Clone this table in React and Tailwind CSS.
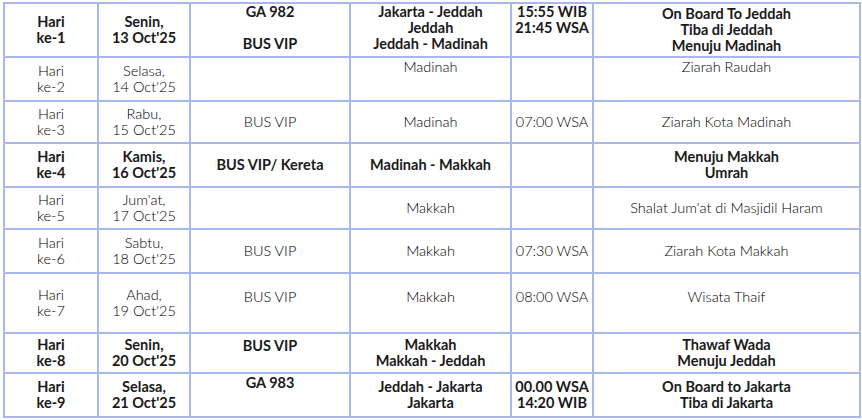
const rows = [
  {
    h: "h-[52px]",
    bold: true,
    cells: [
      { t: ["Hari", "ke-1"] },
      { t: ["Senin,", "13 Oct'25"] },
      { t: ["GA 982", "\u00a0", "BUS VIP"], pos: "justify-start pt-[0px]" },
      { t: ["Jakarta - Jeddah", "Jeddah", "Jeddah - Madinah"], pos: "justify-start pt-[0px]" },
      { t: ["15:55 WIB", "21:45 WSA"], pos: "justify-start pt-[0px]" },
      { t: ["On Board To Jeddah", "Tiba di Jeddah", "Menuju Madinah"] },
    ],
  },
  {
    h: "h-[42px]",
    cells: [
      { t: ["Hari", "ke-2"] },
      { t: ["Selasa,", "14 Oct'25"] },
      { t: [] },
      { t: ["Madinah"], pos: "justify-start pt-[1px]" },
      { t: [] },
      { t: ["Ziarah Raudah"], pos: "justify-start pt-[1px]" },
    ],
  },
  {
    h: "h-[40px]",
    cells: [
      { t: ["Hari", "ke-3"] },
      { t: ["Rabu,", "15 Oct'25"] },
      { t: ["BUS VIP"] },
      { t: ["Madinah"] },
      { t: ["07:00 WSA"] },
      { t: ["Ziarah Kota Madinah"] },
    ],
  },
  {
    h: "h-[42px]",
    bold: true,
    cells: [
      { t: ["Hari", "ke-4"] },
      { t: ["Kamis,", "16 Oct'25"] },
      { t: ["BUS VIP/ Kereta"] },
      { t: ["Madinah - Makkah"] },
      { t: [] },
      { t: ["Menuju Makkah", "Umrah"] },
    ],
  },
  {
    h: "h-[40px]",
    cells: [
      { t: ["Hari", "ke-5"] },
      { t: ["Jum'at,", "17 Oct'25"] },
      { t: [] },
      { t: ["Makkah"] },
      { t: [] },
      { t: ["Shalat Jum'at di Masjidil Haram"] },
    ],
  },
  {
    h: "h-[42px]",
    cells: [
      { t: ["Hari", "ke-6"] },
      { t: ["Sabtu,", "18 Oct'25"] },
      { t: ["BUS VIP"] },
      { t: ["Makkah"] },
      { t: ["07:30 WSA"] },
      { t: ["Ziarah Kota Makkah"] },
    ],
  },
  {
    h: "h-[58px]",
    cells: [
      { t: ["Hari", "ke-7"] },
      { t: ["Ahad,", "19 Oct'25"] },
      { t: ["BUS VIP"], pos: "justify-center pb-[12px]" },
      { t: ["Makkah"], pos: "justify-center pb-[12px]" },
      { t: ["08:00 WSA"], pos: "justify-center pb-[12px]" },
      { t: ["Wisata Thaif"], pos: "justify-center pb-[12px]" },
    ],
  },
  {
    h: "h-[38px]",
    bold: true,
    cells: [
      { t: ["Hari", "ke-8"] },
      { t: ["Senin,", "20 Oct'25"] },
      { t: ["BUS VIP"], pos: "justify-start pt-[4px]" },
      { t: ["Makkah", "Makkah - Jeddah"] },
      { t: [] },
      { t: ["Thawaf Wada", "Menuju Jeddah"] },
    ],
  },
  {
    h: "h-[42px]",
    bold: true,
    cells: [
      { t: ["Hari", "ke-9"] },
      { t: ["Selasa,", "21 Oct'25"] },
      { t: ["GA 983"], pos: "justify-start pt-[1px]" },
      { t: ["Jeddah - Jakarta", "Jakarta"] },
      { t: ["00.00 WSA", "14:20 WIB"] },
      { t: ["On Board to Jakarta", "Tiba di Jakarta"] },
    ],
  },
];

function Cell({ cell, bold, h }) {
  return (
    <div
      className={`${h} bg-white flex flex-col items-center text-center whitespace-nowrap leading-[16px] ${cell.pos || "justify-center"} ${bold ? "font-bold text-[#1a1a1a]" : "font-light text-black"}`}
    >
      {cell.t.map((line, i) => (
        <span key={i}>{line}</span>
      ))}
    </div>
  );
}

export default function App() {
  return (
    <div className="w-[862px] h-[420px] bg-white pt-[2px] pl-[3px]" style={{ fontFamily: "Lato, 'Open Sans', sans-serif" }}>
      <div className="w-[858px] grid grid-cols-[92px_90px_158px_159px_80px_265px] gap-[2px] p-[2px] bg-[#aab7ea] text-[14.5px]">
        {rows.map((row, r) =>
          row.cells.map((cell, c) => (
            <Cell key={`${r}-${c}`} cell={cell} bold={row.bold} h={row.h} />
          ))
        )}
      </div>
    </div>
  );
}
